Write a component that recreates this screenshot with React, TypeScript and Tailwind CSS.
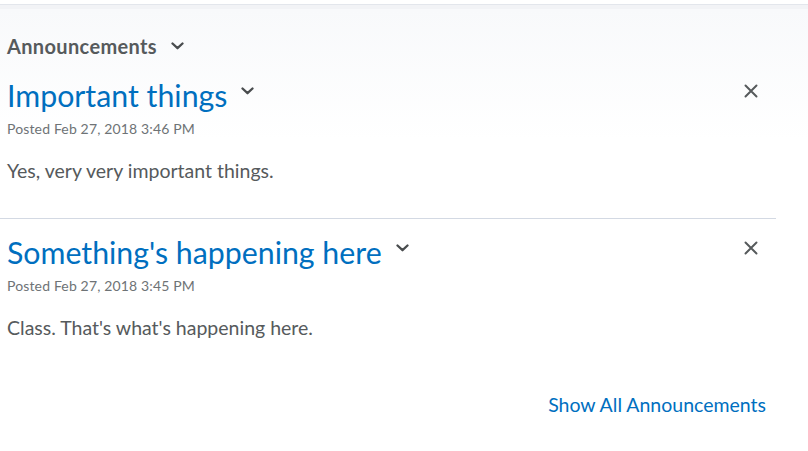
type Item = { title: string; posted: string; body: string };

const items: Item[] = [
	{ title: "Important things", posted: "Posted Feb 27, 2018 3:46 PM", body: "Yes, very very important things." },
	{ title: "Something's happening here", posted: "Posted Feb 27, 2018 3:45 PM", body: "Class. That's what's happening here." },
];

const Chevron = ({ className }: { className?: string }) => (
	<svg width="13" height="8" viewBox="0 0 13 8" className={className}>
		<path d="M1.5 1.5 6.5 6.2 11.5 1.5" fill="none" stroke="currentColor" strokeWidth="2.3" strokeLinecap="round" strokeLinejoin="round" />
	</svg>
);

const Close = ({ className }: { className?: string }) => (
	<svg width="14" height="14" viewBox="0 0 14 14" className={className}>
		<path d="M1.5 1.5 12.5 12.5M12.5 1.5 1.5 12.5" fill="none" stroke="currentColor" strokeWidth="2" strokeLinecap="round" />
	</svg>
);

const Announcement = ({ item, last }: { item: Item; last: boolean }) => (
	<div className={last ? "" : "border-b border-[#d3d9e3] pb-[34px] mb-[14px]"}>
		<div className="pl-[7px] pr-[18px]">
			<div className="flex items-start justify-between">
				<div className="flex items-center">
					<h2 className="text-[30.3px] leading-[38px] text-[#006fbf]">{item.title}</h2>
					<Chevron className="ml-[14px] mt-[-8px] text-[#494c4e]" />
				</div>
				<Close className="mt-[8px] text-[#565a5c]" />
			</div>
			<p className="text-[14px] leading-[18px] tracking-[0.15px] text-[#6e7376] mt-[6px]">{item.posted}</p>
			<p className="text-[19.5px] leading-[26px] text-[#565a5c] mt-[20px]">{item.body}</p>
		</div>
	</div>
);

export default function App() {
	return (
		<div className="w-[808px] h-[451px] bg-white overflow-hidden" style={{ fontFamily: "Lato, 'Noto Sans', sans-serif" }}>
			<div className="h-[4px] bg-white" />
			<div className="h-[136px] -mb-[140px] border-t border-[#e3e6ec] flex flex-col">
				<div className="h-[4px] bg-[#f2f3f6]" />
				<div className="flex-1 bg-gradient-to-b from-[#f8f9fb] to-white" />
			</div>
			<div className="relative w-[776px] pt-[4px]">
				<div className="flex items-center pt-[30px] pl-[7px]">
					<h1 className="text-[20px] leading-[24px] font-bold tracking-[0.35px] text-[#565a5c]">Announcements</h1>
					<Chevron className="ml-[14px] text-[#494c4e]" />
				</div>
				<div className="mt-[18px]">
					{items.map((it, i) => (
						<Announcement key={i} item={it} last={i === items.length - 1} />
					))}
				</div>
				<div className="flex justify-end mt-[51px] pr-[10px]">
					<a className="text-[19.5px] leading-[26px] text-[#006fbf]">Show All Announcements</a>
				</div>
			</div>
		</div>
	);
}
